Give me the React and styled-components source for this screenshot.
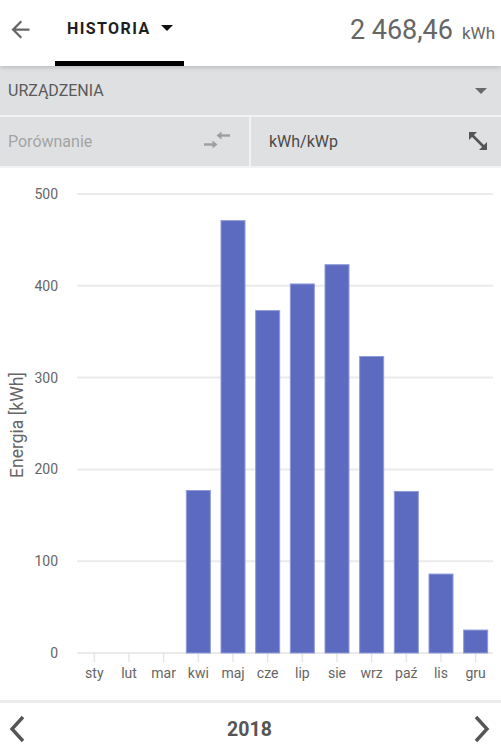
import styled, { createGlobalStyle } from 'styled-components';

const GlobalStyle = createGlobalStyle`
  html, body {
    margin: 0;
    padding: 0;
    background: #ffffff;
    font-family: Roboto, "Noto Sans", Arial, sans-serif;
  }
`;

const MONTHS = ['sty', 'lut', 'mar', 'kwi', 'maj', 'cze', 'lip', 'sie', 'wrz', 'paź', 'lis', 'gru'];
const VALUES = [0, 0, 0, 177, 471, 373, 402, 423, 323, 176, 86, 25];
const TICKS = [0, 100, 200, 300, 400, 500];

// chart geometry (svg coords)
const PLOT_LEFT = 77;
const PLOT_RIGHT = 493;
const ZERO_Y = 485;
const PX_PER_UNIT = 0.918;

export default function App() {
  return (
    <>
      <GlobalStyle />
      <Screen>
        <Header>
          <BackButton aria-label="wstecz">
            <svg width="27" height="27" viewBox="0 0 24 24">
              <path d="M20 11H7.83l5.59-5.59L12 4l-8 8 8 8 1.41-1.41L7.83 13H20v-2z" fill="#666" />
            </svg>
          </BackButton>
          <Tab>
            <TabLabel>HISTORIA</TabLabel>
            <svg width="12" height="6" viewBox="0 0 12 6">
              <path d="M0 0h12L6 6z" fill="#111" />
            </svg>
          </Tab>
          <Total>
            2 468,46<Unit>kWh</Unit>
          </Total>
        </Header>

        <SelectRow>
          <SelectText>URZĄDZENIA</SelectText>
          <svg width="12" height="6" viewBox="0 0 12 6">
            <path d="M0 0h12L6 6z" fill="#6a6a6a" />
          </svg>
        </SelectRow>

        <OptionRow>
          <OptionCell>
            <OptionText $muted>Porównanie</OptionText>
            <svg width="30" height="22" viewBox="0 0 30 22">
              <path d="M28 5.5H19" stroke="#9e9e9e" strokeWidth="2.4" />
              <path d="M19.5 1.5v8L14.5 5.5z" fill="#9e9e9e" />
              <path d="M2 14.5h9" stroke="#9e9e9e" strokeWidth="2.4" />
              <path d="M10.5 10.5v8l5-4z" fill="#9e9e9e" />
            </svg>
          </OptionCell>
          <OptionCell>
            <OptionText>kWh/kWp</OptionText>
            <svg width="22" height="22" viewBox="0 0 22 22">
              <path d="M5 5l12 12" stroke="#555" strokeWidth="2.6" />
              <path d="M2 2h8L2 10z" fill="#555" />
              <path d="M20 20h-8l8-8z" fill="#555" />
            </svg>
          </OptionCell>
        </OptionRow>

        <ChartArea>
          <Chart />
        </ChartArea>

        <Footer>
          <NavButton aria-label="poprzedni">
            <svg width="18" height="30" viewBox="0 0 18 30">
              <path d="M15 3L4 15l11 12" stroke="#555" strokeWidth="3.4" fill="none" />
            </svg>
          </NavButton>
          <Year>2018</Year>
          <NavButton aria-label="następny">
            <svg width="18" height="30" viewBox="0 0 18 30">
              <path d="M3 3l11 12L3 27" stroke="#555" strokeWidth="3.4" fill="none" />
            </svg>
          </NavButton>
        </Footer>
      </Screen>
    </>
  );
}

function Chart() {
  const band = (PLOT_RIGHT - PLOT_LEFT) / MONTHS.length;
  const barW = 24;
  return (
    <svg width="501" height="532" viewBox="0 0 501 532">
      {TICKS.map((t) => {
        const y = ZERO_Y - t * PX_PER_UNIT;
        return (
          <g key={t}>
            <line x1={PLOT_LEFT} x2={PLOT_RIGHT} y1={y} y2={y} stroke="#ebebeb" strokeWidth="2" />
            <AxisText x="58" y={y + 5} textAnchor="end">{t}</AxisText>
          </g>
        );
      })}
      {MONTHS.map((m, i) => {
        const cx = PLOT_LEFT + band * (i + 0.5);
        const h = VALUES[i] * PX_PER_UNIT;
        return (
          <g key={m}>
            <line x1={cx} x2={cx} y1={ZERO_Y} y2={ZERO_Y + 9} stroke="#e6e6e6" strokeWidth="1.5" />
            {h > 0 && (
              <rect
                x={cx - barW / 2}
                y={ZERO_Y - h}
                width={barW}
                height={h}
                fill="#5c6bc0"
                stroke="#8f9ad8"
                strokeWidth="1"
              />
            )}
            <AxisText x={cx} y={ZERO_Y + 25} textAnchor="middle">{m}</AxisText>
          </g>
        );
      })}
      <AxisTitle transform="translate(23 257) rotate(-90)" textAnchor="middle">
        Energia [kWh]
      </AxisTitle>
    </svg>
  );
}

const Screen = styled.div`
  width: 501px;
  height: 750px;
  display: flex;
  flex-direction: column;
  overflow: hidden;
  background: #fff;
`;

const Header = styled.header`
  height: 66px;
  min-height: 66px;
  display: flex;
  align-items: stretch;
  background: #fff;
  position: relative;
  z-index: 1;
  box-shadow: 0 1px 5px rgba(0, 0, 0, 0.2);
`;

const BackButton = styled.button`
  width: 55px;
  border: 0;
  background: none;
  padding: 0 0 8px 7px;
  display: flex;
  align-items: center;
  justify-content: flex-start;
`;

const Tab = styled.div`
  width: 129px;
  box-sizing: border-box;
  padding: 0 0 5px 12px;
  display: flex;
  align-items: center;
  gap: 10px;
  border-bottom: 5px solid #000;
`;

const TabLabel = styled.span`
  font-size: 16px;
  font-weight: 700;
  letter-spacing: 1.4px;
  color: #1e1e1e;
`;

const Total = styled.div`
  margin-left: auto;
  padding: 0 6px 6px 0;
  display: flex;
  align-items: baseline;
  align-self: center;
  font-size: 27px;
  color: #666;
`;

const Unit = styled.span`
  font-size: 17px;
  margin-left: 9px;
`;

const SelectRow = styled.div`
  height: 50px;
  display: flex;
  align-items: center;
  justify-content: space-between;
  padding: 0 14px 0 8px;
  background: #dfe0e2;
`;

const SelectText = styled.span`
  font-size: 16px;
  color: #5a5a5a;
`;

const OptionRow = styled.div`
  height: 49px;
  display: grid;
  grid-template-columns: 249px 1fr;
  gap: 2px;
  border-top: 2px solid #f3f3f4;
  border-bottom: 2px solid #f3f3f4;
  background: #f3f3f4;
`;

const OptionCell = styled.div`
  display: flex;
  align-items: center;
  justify-content: space-between;
  padding: 0 17px 0 8px;
  background: #dfe0e2;

  & + & {
    padding: 0 12px 0 18px;
  }
`;

const OptionText = styled.span`
  font-size: 16px;
  color: ${({ $muted }) => ($muted ? '#a4a4a4' : '#4a4a4a')};
`;

const ChartArea = styled.div`
  flex: 1;
  display: flex;
  border-bottom: 3px solid #ececec;
`;

const AxisText = styled.text`
  font-family: Roboto, Arial, sans-serif;
  font-size: 14px;
  fill: #666;
`;

const AxisTitle = styled.text`
  font-family: Roboto, Arial, sans-serif;
  font-size: 17.5px;
  fill: #666;
`;

const Footer = styled.footer`
  height: 48px;
  display: flex;
  align-items: center;
  justify-content: space-between;
  padding: 6px 10px 0 8px;
  box-sizing: border-box;
`;

const NavButton = styled.button`
  border: 0;
  background: none;
  padding: 0;
  display: flex;
`;

const Year = styled.div`
  font-size: 19.5px;
  font-weight: 700;
  color: #555;
`;
